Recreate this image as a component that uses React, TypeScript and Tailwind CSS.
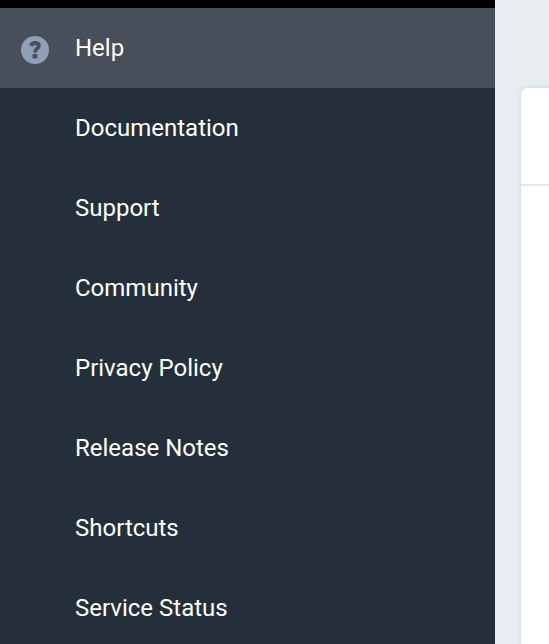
import React from "react";

const links = ["Documentation", "Support", "Community", "Privacy Policy", "Release Notes", "Shortcuts", "Service Status"];

function HelpIcon() {
  return (
    <svg viewBox="0 0 28 28" className="mt-1 size-7 shrink-0" fill="none" aria-hidden="true">
      <circle cx="14" cy="14" r="14" className="fill-[#8f9fb5]" />
      <path
        d="M9.7 9.7C10.8 7.8 12.2 7 14.1 7C16.4 7 17.8 8.3 17.8 10C17.8 12.8 13.9 12.5 13.9 16.4"
        className="stroke-[#484e5a]"
        strokeWidth="3.9"
      />
      <rect x="11.5" y="18" width="4.8" height="4.4" rx="0.5" className="fill-[#484e5a]" />
    </svg>
  );
}

export default function App() {
  return (
    <div className="flex h-[644px] w-[549px] overflow-hidden bg-[#e8edf0] font-['Roboto',sans-serif] text-2xl text-white antialiased">
      <nav className="w-[495px] shrink-0 bg-[#252f3b]">
        <div className="h-2 bg-black" />
        <div className="flex h-20 items-center bg-[#484e5a] pl-[21px]">
          <HelpIcon />
          <span className="ml-[26px]">Help</span>
        </div>
        <ul>
          {links.map((label) => (
            <li key={label} className="flex h-20 items-center pl-[75px]">{label}</li>
          ))}
        </ul>
      </nav>
      <main className="flex-1 pl-[26px] pt-[88px]">
        <section className="h-[600px] w-[60px] rounded-tl-md bg-white shadow-[0_0_4px_#c8cfd7]">
          <div className="h-[98px] border-b-2 border-[#e1e6e9]" />
        </section>
      </main>
    </div>
  );
}
